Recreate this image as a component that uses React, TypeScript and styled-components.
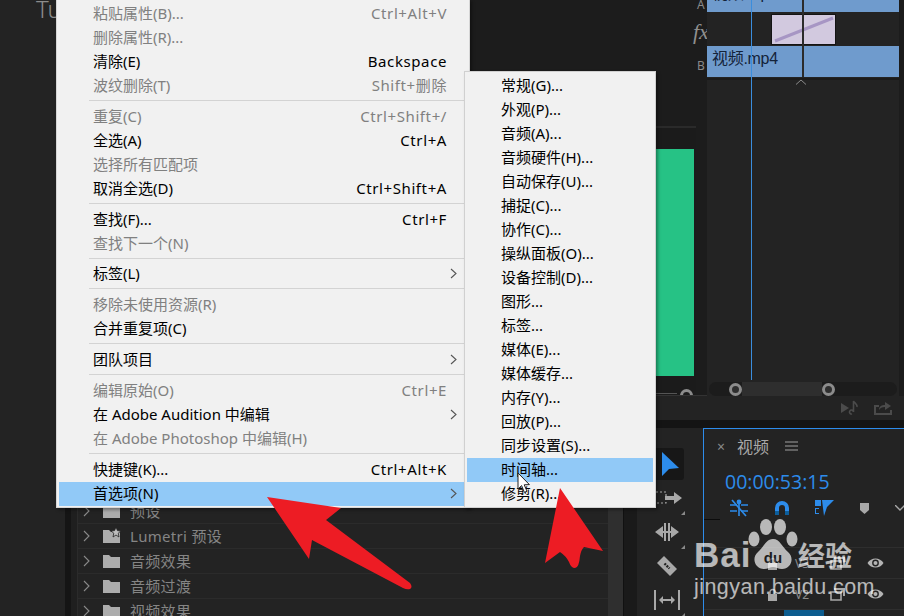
import styled, { createGlobalStyle } from "styled-components";

const UI_FONT = `"Noto Sans", "Noto Sans CJK SC", sans-serif`;

const GlobalStyle = createGlobalStyle`
  html, body {
    margin: 0;
    padding: 0;
    background: #232323;
  }
  * {
    box-sizing: border-box;
  }
`;

type MenuEntry = { label: string; shortcut?: string; off?: boolean; sub?: boolean; active?: boolean };

const MENU: MenuEntry[][] = [
  [
    { label: "粘贴属性(B)...", shortcut: "Ctrl+Alt+V", off: true },
    { label: "删除属性(R)...", off: true },
    { label: "清除(E)", shortcut: "Backspace" },
    { label: "波纹删除(T)", shortcut: "Shift+删除", off: true },
  ],
  [
    { label: "重复(C)", shortcut: "Ctrl+Shift+/", off: true },
    { label: "全选(A)", shortcut: "Ctrl+A" },
    { label: "选择所有匹配项", off: true },
    { label: "取消全选(D)", shortcut: "Ctrl+Shift+A" },
  ],
  [
    { label: "查找(F)...", shortcut: "Ctrl+F" },
    { label: "查找下一个(N)", off: true },
  ],
  [{ label: "标签(L)", sub: true }],
  [
    { label: "移除未使用资源(R)", off: true },
    { label: "合并重复项(C)" },
  ],
  [{ label: "团队项目", sub: true }],
  [
    { label: "编辑原始(O)", shortcut: "Ctrl+E", off: true },
    { label: "在 Adobe Audition 中编辑", sub: true },
    { label: "在 Adobe Photoshop 中编辑(H)", off: true },
  ],
  [
    { label: "快捷键(K)...", shortcut: "Ctrl+Alt+K" },
    { label: "首选项(N)", sub: true, active: true },
  ],
];

const PREFS = [
  "常规(G)...",
  "外观(P)...",
  "音频(A)...",
  "音频硬件(H)...",
  "自动保存(U)...",
  "捕捉(C)...",
  "协作(C)...",
  "操纵面板(O)...",
  "设备控制(D)...",
  "图形...",
  "标签...",
  "媒体(E)...",
  "媒体缓存...",
  "内存(Y)...",
  "回放(P)...",
  "同步设置(S)...",
  "时间轴...",
  "修剪(R)...",
];

const EFFECTS = ["预设", "Lumetri 预设", "音频效果", "音频过渡", "视频效果"];

function App() {
  return (
    <>
      <GlobalStyle />
      <Page>
        <TopZone>
          <UpperRow>
            <ProjectPane>
              <ProjectTitle>Tu</ProjectTitle>
            </ProjectPane>
            <MonitorPane>
              <MonitorHead />
              <MonitorBody>
                <GreenFrame />
                <ScrubLine />
                <ScrubRing />
              </MonitorBody>
            </MonitorPane>
            <TrackLabels>
              <TrackLetter $h={8}>A</TrackLetter>
              <FxLabel>fx</FxLabel>
              <TrackLetter $h={18}>B</TrackLetter>
            </TrackLabels>
            <SourceTimeline>
              <TrackArea>
                <ClipRow $h={12}>
                  <ClipTopName>视频.mp4</ClipTopName>
                </ClipRow>
                <EffectRow>
                  <EffectClip>
                    <svg width="63" height="29" viewBox="0 0 63 29">
                      <line x1="3" y1="26" x2="61" y2="3" stroke="#a796c4" strokeWidth="3" />
                    </svg>
                  </EffectClip>
                </EffectRow>
                <ClipRow $h={31}>
                  <ClipName>视频.mp4</ClipName>
                </ClipRow>
                <RowLine />
                <Caret>
                  <svg width="12" height="6" viewBox="0 0 12 6">
                    <path d="M1 5.5 L6 1 L11 5.5" fill="none" stroke="#8a8a8a" strokeWidth="1" />
                  </svg>
                </Caret>
                <EditLine />
                <Playhead />
              </TrackArea>
              <ZoomBar>
                <ZoomHandle />
                <ZoomRange />
                <ZoomHandle />
              </ZoomBar>
            </SourceTimeline>
            <EdgeStrip />
          </UpperRow>
          <FooterBar>
            <svg width="20" height="16" viewBox="0 0 20 16">
              <path d="M1 3 L9 8 L1 13 Z" fill="#4b4b4b" />
              <path d="M12 14 a2 2 0 1 1 1.5 -2 V1 c1 2 4 3 3.5 6" fill="none" stroke="#4b4b4b" strokeWidth="1.6" />
            </svg>
            <svg width="20" height="16" viewBox="0 0 20 16">
              <path d="M1 5 H6 V7 H3 V13 H17 V10 H19 V15 H1 Z" fill="#4b4b4b" />
              <path d="M6 10 C6 6 9 5 12 5 V2 L18 6 L12 10 V7 C9 7 7 8 6 10 Z" fill="#4b4b4b" />
            </svg>
          </FooterBar>
          <PanelGap />
        </TopZone>

        <BottomZone>
          <LeftGutter />
          <EffectsEdge />
          <EffectsPane>
            {EFFECTS.map((name, i) => (
              <EffectListRow key={name}>
                <svg width="9" height="14" viewBox="0 0 9 14">
                  <path d="M2 2 L7 7 L2 12" fill="none" stroke="#8a8a8a" strokeWidth="1.1" />
                </svg>
                <svg width="20" height="16" viewBox="0 0 20 16">
                  <path d="M1 2 H7 L9 4 H18 V15 H1 Z" fill="#acacac" />
                  {i === 1 && <path d="M14 -1 L15.4 2.6 L19 3 L16.2 5.2 L17 9 L14 7 L11 9 L11.8 5.2 L9 3 L12.6 2.6 Z" fill="#bdbdbd" stroke="#232323" strokeWidth="0.8" />}
                </svg>
                <EffectName>{name}</EffectName>
              </EffectListRow>
            ))}
          </EffectsPane>
          <PaneScroll />
          <PaneGutter />
          <ToolsPanel>
            <ToolSlot $selected>
              <svg width="20" height="26" viewBox="0 0 20 26">
                <path d="M2 1 L19 17 L9 18 L2 25 Z" fill="#2d8ceb" />
              </svg>
            </ToolSlot>
            <ToolSlot $corner>
              <svg width="32" height="16" viewBox="0 0 32 16">
                <rect x="1" y="2" width="14" height="11" fill="none" stroke="#a8a8a8" strokeWidth="1.2" strokeDasharray="2 2" />
                <path d="M14 6 H23 V2 L31 8 L23 14 V10 H14 Z" fill="#a8a8a8" />
              </svg>
            </ToolSlot>
            <ToolSlot $corner>
              <svg width="26" height="20" viewBox="0 0 26 20">
                <path d="M1 10 L9 4 V16 Z M25 10 L17 4 V16 Z" fill="#a8a8a8" />
                <rect x="10" y="1" width="2" height="18" fill="#a8a8a8" />
                <rect x="14" y="1" width="2" height="18" fill="#a8a8a8" />
                <rect x="9" y="9" width="8" height="2" fill="#a8a8a8" />
              </svg>
            </ToolSlot>
            <ToolSlot>
              <svg width="22" height="22" viewBox="0 0 22 22">
                <path d="M8 1 L21 14 L14 21 L1 8 Z" fill="#a8a8a8" />
                <path d="M8.5 8.5 L13.5 13.5" stroke="#232323" strokeWidth="2.4" strokeDasharray="2 1" />
              </svg>
            </ToolSlot>
            <ToolSlot $corner>
              <svg width="28" height="22" viewBox="0 0 28 22">
                <rect x="1" y="1" width="2" height="20" fill="#a8a8a8" />
                <rect x="25" y="1" width="2" height="20" fill="#a8a8a8" />
                <path d="M6 11 L10 7 V10 H18 V7 L22 11 L18 15 V12 H10 V15 Z" fill="#a8a8a8" />
              </svg>
            </ToolSlot>
          </ToolsPanel>
          <SequencePanel>
            <TabRow>
              <TabClose>×</TabClose>
              <TabName>视频</TabName>
              <TabMenu>
                <svg width="13" height="10" viewBox="0 0 13 10">
                  <path d="M0 1 H13 M0 5 H13 M0 9 H13" stroke="#a0a0a0" strokeWidth="1.2" />
                </svg>
              </TabMenu>
            </TabRow>
            <Timecode>00:00:53:15</Timecode>
            <SeqTools>
              <svg width="20" height="18" viewBox="0 0 20 18">
                <g stroke="#2d8ceb" strokeWidth="1.6" fill="#2d8ceb">
                  <path d="M10 1 V17 M1 6 H8 M12 6 H19 M1 12 H8 M12 12 H19" fill="none" />
                  <path d="M3 1 L17 17" fill="none" />
                  <circle cx="10" cy="3" r="1.6" />
                </g>
              </svg>
              <svg width="16" height="16" viewBox="0 0 16 16">
                <path d="M1 15 V8 a7 7 0 0 1 14 0 V15 H11 V8 a3 3 0 0 0 -6 0 V15 Z" fill="#2d8ceb" />
                <path d="M1 11 H5 V15 H1 Z M11 11 H15 V15 H11 Z" fill="#0d5e9c" />
              </svg>
              <svg width="19" height="18" viewBox="0 0 19 18">
                <path d="M0 1 H6 V7 H0 Z" fill="#2d8ceb" />
                <path d="M0 9 H4 V10 H1 V14 H4 V15 H0 Z" fill="#2d8ceb" />
                <path d="M7 1 H19 L12 8 L9 17 Z" fill="#2d8ceb" />
              </svg>
              <svg width="11" height="13" viewBox="0 0 11 13">
                <path d="M1 1 H10 V8 L5.5 12 L1 8 Z" fill="#a8a8a8" />
              </svg>
              <svg width="10" height="6" viewBox="0 0 10 6">
                <path d="M0 0 L5 5 L10 0" fill="none" stroke="#a8a8a8" strokeWidth="1.4" />
              </svg>
            </SeqTools>
            <RulerTick />
            <TrackHeader>
              <LockGlyph />
              <TrackName>V3</TrackName>
              <FilmGlyph />
              <EyeGlyph />
            </TrackHeader>
            <TrackHeader>
              <LockGlyph />
              <TrackName>V2</TrackName>
              <FilmGlyph />
              <EyeGlyph />
            </TrackHeader>
            <ClipLane>
              <SeqClip />
            </ClipLane>
          </SequencePanel>
        </BottomZone>

        <MainMenu>
          {MENU.map((section, i) => (
            <div key={i}>
              {i > 0 && <MenuDivider />}
              {section.map((item) => (
                <MenuRow key={item.label} $off={item.off} $active={item.active}>
                  <span>{item.label}</span>
                  {item.shortcut && <Shortcut>{item.shortcut}</Shortcut>}
                  {item.sub && (
                    <SubArrow>
                      <svg width="7" height="11" viewBox="0 0 7 11">
                        <path d="M1 1 L6 5.5 L1 10" fill="none" stroke="#555" strokeWidth="1.1" />
                      </svg>
                    </SubArrow>
                  )}
                </MenuRow>
              ))}
            </div>
          ))}
        </MainMenu>

        <SubMenu>
          {PREFS.map((label) => (
            <SubRow key={label} $active={label === "时间轴..."}>
              {label}
            </SubRow>
          ))}
        </SubMenu>

        <Pointer width="14" height="22" viewBox="0 0 14 22">
          <path d="M1 1 V17 L4.6 13.6 L7.4 20.4 L10 19.2 L7.2 12.8 L12.4 12.6 Z" fill="#fff" stroke="#222" strokeWidth="1" />
        </Pointer>

        <Watermark>
          <LogoLine>
            <LogoBai>Bai</LogoBai>
            <svg width="50" height="52" viewBox="0 0 50 52">
              <ellipse cx="6" cy="20" rx="5.5" ry="7.5" fill="#fff" />
              <ellipse cx="18" cy="8" rx="6" ry="8" fill="#fff" />
              <ellipse cx="32" cy="8" rx="6" ry="8" fill="#fff" />
              <ellipse cx="44" cy="20" rx="5.5" ry="7.5" fill="#fff" />
              <path d="M25 20 C32 20 34 28 40 33 C47 39 43 50 34 50 C30 50 28 48 25 48 C22 48 20 50 16 50 C7 50 3 39 10 33 C16 28 18 20 25 20 Z" fill="#fff" />
              <PawText x="25" y="44" textAnchor="middle">du</PawText>
            </svg>
            <LogoCn>经验</LogoCn>
          </LogoLine>
          <LogoUrl>jingyan.baidu.com</LogoUrl>
        </Watermark>

        <Annotation width="904" height="616" viewBox="0 0 904 616">
          <path d="M267 497 L341 508 L326 520 L410 583 Q413 587 410 589 Q407 590 403 588 L312 540 L309 559 Z" fill="#ed1c24" />
          <path d="M560 488 L603 551 L584 547 Q581 550 580 556 Q579 568 575 568 Q571 568 569 562 Q566 556 560 552 L545 563 Z" fill="#ed1c24" />
        </Annotation>
      </Page>
    </>
  );
}

function LockGlyph() {
  return (
    <svg width="11" height="13" viewBox="0 0 11 13">
      <path d="M1 6 H10 V13 H1 Z" fill="#a8a8a8" />
      <path d="M3 6 V4 a2.5 2.5 0 0 1 5 0 V6" fill="none" stroke="#a8a8a8" strokeWidth="1.4" />
    </svg>
  );
}

function FilmGlyph() {
  return (
    <svg width="16" height="14" viewBox="0 0 16 14">
      <path d="M4 1 H15 V9 H13 V3 H4 Z" fill="#a8a8a8" />
      <path d="M1 5 H11 V13 H1 Z" fill="none" stroke="#a8a8a8" strokeWidth="1.6" />
    </svg>
  );
}

function EyeGlyph() {
  return (
    <svg width="17" height="12" viewBox="0 0 17 12">
      <path d="M0.5 6 C4 0 13 0 16.5 6 C13 12 4 12 0.5 6 Z" fill="#b4b4b4" />
      <circle cx="8.5" cy="6" r="3.4" fill="#232323" />
      <circle cx="8.5" cy="6" r="2" fill="#b4b4b4" />
    </svg>
  );
}

//CSS
const Page = styled.div`
  position: relative;
  display: flex;
  flex-direction: column;
  width: 904px;
  height: 616px;
  overflow: hidden;
  background: #232323;
  font-family: ${UI_FONT};
`;

const TopZone = styled.div`
  display: flex;
  flex-direction: column;
  height: 428px;
  flex: none;
`;

const UpperRow = styled.div`
  display: flex;
  height: 396px;
`;

const ProjectPane = styled.div`
  width: 470px;
  background: #232323;
`;

const ProjectTitle = styled.div`
  padding-left: 36px;
  margin-top: -7px;
  font-size: 24px;
  font-weight: 300;
  line-height: 32px;
  color: #8c8c8c;
`;

const MonitorPane = styled.div`
  display: flex;
  flex-direction: column;
  width: 226px;
`;

const MonitorHead = styled.div`
  height: 128px;
  background: #1c1c1c;
  border-bottom: 2px solid #2a2a2a;
`;

const MonitorBody = styled.div`
  position: relative;
  flex: 1;
  padding: 21px 2px 0 0;
  overflow: hidden;
  background: #1b1b1b;
  border-bottom: 1px solid #333;
`;

const GreenFrame = styled.div`
  width: 224px;
  height: 227px;
  background: #26c285;
`;

const ScrubLine = styled.div`
  position: absolute;
  left: 0;
  bottom: 1px;
  width: 207px;
  height: 1px;
  background: #555;
`;

const ScrubRing = styled.div`
  position: absolute;
  left: 210px;
  bottom: -7px;
  width: 13px;
  height: 13px;
  border: 3px solid #8c8c8c;
  border-radius: 50%;
`;

const TrackLabels = styled.div`
  display: flex;
  flex-direction: column;
  width: 11px;
  background: #1c1c1c;
  color: #8a8a8a;
  border-bottom: 1px solid #333;
`;

const TrackLetter = styled.div<{ $h: number }>`
  display: flex;
  align-items: center;
  height: ${(p) => p.$h}px;
  padding-left: 1px;
  font-size: 12px;
`;

const FxLabel = styled.div`
  height: 48px;
  margin-left: -3px;
  font-family: "Liberation Serif", serif;
  font-style: italic;
  font-size: 22px;
  line-height: 48px;
  color: #8f8f8f;
`;

const SourceTimeline = styled.div`
  display: flex;
  flex-direction: column;
  flex: 1;
  background: #232323;
`;

const TrackArea = styled.div`
  position: relative;
  flex: 1;
  display: flex;
  flex-direction: column;
`;

const ClipRow = styled.div<{ $h: number }>`
  height: ${(p) => p.$h}px;
  overflow: hidden;
  background: #6f9bcd;
  color: #14233a;
`;

const ClipTopName = styled.div`
  margin-top: -16px;
  padding-left: 5px;
  font-family: "Liberation Sans", "Noto Sans CJK SC", sans-serif;
  font-size: 16px;
  letter-spacing: -0.3px;
  line-height: 20px;
`;

const ClipName = styled.div`
  padding-left: 5px;
  font-family: "Liberation Sans", "Noto Sans CJK SC", sans-serif;
  font-size: 16px;
  letter-spacing: -0.3px;
  line-height: 26px;
`;

const EffectRow = styled.div`
  height: 34px;
  padding: 3px 0 2px 65px;
`;

const EffectClip = styled.div`
  width: 63px;
  height: 29px;
  background: #d2c9df;
  outline: 1px solid #141414;
`;

const RowLine = styled.div`
  height: 2px;
  margin-top: 1px;
  background: #1b1b1b;
`;

const Caret = styled.div`
  display: flex;
  padding: 0 0 0 88px;
  margin-top: -1px;
`;

const EditLine = styled.div`
  position: absolute;
  top: 0;
  left: 95px;
  width: 2px;
  height: 77px;
  background: #2b2b2b;
`;

const Playhead = styled.div`
  position: absolute;
  top: 0;
  left: 44px;
  width: 1px;
  height: 380px;
  background: #3a8ddd;
`;

const ZoomBar = styled.div`
  display: flex;
  align-items: center;
  height: 14px;
  margin: 0 2px 0 2px;
  padding-left: 20px;
  border-radius: 7px;
  background: #1c1c1c;
`;

const ZoomHandle = styled.div`
  flex: none;
  width: 13px;
  height: 13px;
  border: 3px solid #8c8c8c;
  border-radius: 50%;
  background: #2e2e2e;
`;

const ZoomRange = styled.div`
  width: 80px;
  height: 14px;
  background: #2e2e2e;
`;

const EdgeStrip = styled.div`
  width: 5px;
  background: #1c1c1c;
`;

const FooterBar = styled.div`
  display: flex;
  align-items: center;
  justify-content: flex-end;
  gap: 13px;
  height: 24px;
  padding-right: 11px;
  background: #232323;
`;

const PanelGap = styled.div`
  flex: 1;
  margin-left: 470px;
  background: #141414;
`;

const BottomZone = styled.div`
  display: flex;
  flex: 1;
  min-height: 0;
`;

const LeftGutter = styled.div`
  flex: none;
  width: 71px;
  background: #232323;
  border-right: 6px solid #151515;
`;

const EffectsEdge = styled.div`
  flex: none;
  width: 7px;
  background: #1f1f1f;
  border-right: 1px solid #2b2b2b;
`;

const EffectsPane = styled.div`
  flex: none;
  width: 530px;
  padding-top: 71px;
  background: #232323;
`;

const EffectListRow = styled.div`
  display: flex;
  align-items: center;
  height: 25px;
  padding-left: 4px;
  border-bottom: 1px solid #2b2b2b;
  svg:nth-child(2) {
    margin-left: 11px;
  }
`;

const EffectName = styled.span`
  margin: -2px 0 0 8px;
  font-size: 15px;
  color: #858585;
  letter-spacing: 0.3px;
`;

const PaneScroll = styled.div`
  flex: none;
  width: 15px;
  background: #2f2f2f;
`;

const PaneGutter = styled.div`
  flex: none;
  width: 14px;
  background: #1a1a1a;
  border-left: 1px solid #111;
`;

const ToolsPanel = styled.div`
  display: flex;
  flex: none;
  flex-direction: column;
  gap: 2px;
  width: 66px;
  padding: 20px 19px 0 10px;
  background: #232323;
`;

const ToolSlot = styled.div<{ $selected?: boolean; $corner?: boolean }>`
  position: relative;
  display: flex;
  flex: none;
  align-items: center;
  justify-content: center;
  height: 32px;
  padding-left: ${(p) => (p.$selected ? "8px" : "3px")};
  border-radius: 3px;
  background: ${(p) => (p.$selected ? "#171717" : "transparent")};
  &::after {
    content: "";
    display: ${(p) => (p.$corner ? "block" : "none")};
    position: absolute;
    right: -1px;
    bottom: -1px;
    border-left: 4px solid transparent;
    border-bottom: 4px solid #8a8a8a;
  }
`;

const SequencePanel = styled.div`
  flex: none;
  width: 201px;
  overflow: hidden;
  background: #232323;
  border-top: 1px solid #2d8ceb;
  border-left: 1px solid #2d8ceb;
`;

const TabRow = styled.div`
  display: flex;
  align-items: center;
  height: 34px;
  padding-left: 13px;
`;

const TabClose = styled.span`
  width: 20px;
  font-size: 14px;
  color: #8a8a8a;
`;

const TabName = styled.span`
  font-size: 16px;
  color: #a8a8a8;
`;

const TabMenu = styled.span`
  display: flex;
  margin-left: 16px;
`;

const Timecode = styled.div`
  margin-top: 6px;
  padding-left: 21px;
  font-family: "Open Sans", sans-serif;
  font-size: 19.5px;
  line-height: 26px;
  color: #2d8ceb;
`;

const SeqTools = styled.div`
  display: flex;
  align-items: center;
  gap: 25px;
  height: 20px;
  margin-top: 3px;
  padding-left: 25px;
  width: 230px;
  svg {
    flex: none;
  }
`;

const RulerTick = styled.div`
  width: 16px;
  height: 1px;
  margin-top: 1px;
  margin-bottom: 27px;
  background: #0c0c0c;
`;

const TrackHeader = styled.div`
  display: grid;
  grid-template-columns: 24px 22px 33px auto;
  align-items: center;
  height: 31px;
  padding-left: 63px;
  border-top: 1px solid #2e2e2e;
  svg:nth-child(3) {
    justify-self: end;
  }
  svg:nth-child(4) {
    margin-left: 21px;
  }
`;

const TrackName = styled.span`
  font-size: 12px;
  color: #8a8a8a;
  text-align: center;
`;

const ClipLane = styled.div`
  border-top: 1px solid #2e2e2e;
`;

const SeqClip = styled.div`
  width: 40px;
  height: 8px;
  margin-left: 80px;
  background: #0c5c8e;
`;

const MainMenu = styled.div`
  position: absolute;
  top: -1px;
  left: 56px;
  width: 414px;
  height: 509px;
  padding: 2px 2px 0;
  background: #f1f1f1;
  border: 1px solid #d6d6d6;
  box-shadow: 2px 2px 3px rgba(0, 0, 0, 0.35);
`;

const MenuDivider = styled.div`
  height: 6.8px;
  margin-left: 30px;
  padding-top: 2px;
  &::before {
    content: "";
    display: block;
    height: 1px;
    background: #d3d3d3;
  }
`;

const MenuRow = styled.div<{ $off?: boolean; $active?: boolean }>`
  position: relative;
  display: flex;
  align-items: center;
  justify-content: space-between;
  height: 24px;
  padding: 0 20px 2px 34px;
  font-size: 15px;
  line-height: 22px;
  white-space: nowrap;
  color: ${(p) => (p.$off ? "#808080" : "#000")};
  background: ${(p) => (p.$active ? "#91c9f7" : "transparent")};
`;

const Shortcut = styled.span`
  letter-spacing: 0.6px;
`;

const SubArrow = styled.span`
  position: absolute;
  top: 6px;
  right: 10px;
  display: flex;
`;

const SubMenu = styled.div`
  position: absolute;
  top: 71px;
  left: 464px;
  width: 192px;
  height: 437px;
  padding: 2px 2px 0;
  background: #f1f1f1;
  border: 1px solid #d0d0d0;
  box-shadow: 2px 2px 3px rgba(0, 0, 0, 0.35);
`;

const SubRow = styled.div<{ $active?: boolean }>`
  height: 24px;
  padding-left: 34px;
  font-size: 15px;
  line-height: 22px;
  color: #000;
  background: ${(p) => (p.$active ? "#91c9f7" : "transparent")};
`;

const Pointer = styled.svg`
  position: absolute;
  top: 472px;
  left: 517px;
`;

const Watermark = styled.div`
  position: absolute;
  top: 519px;
  left: 694px;
  display: flex;
  flex-direction: column;
  width: 164px;
  color: #fff;
  opacity: 0.68;
  pointer-events: none;
`;

const LogoLine = styled.div`
  display: flex;
  align-items: flex-end;
  height: 52px;
`;

const LogoBai = styled.span`
  width: 54px;
  font-family: "Liberation Sans", sans-serif;
  font-size: 35px;
  font-weight: 700;
  line-height: 32px;
  letter-spacing: 1px;
`;

const LogoCn = styled.span`
  font-family: "Noto Sans CJK SC", sans-serif;
  font-size: 27px;
  font-weight: 700;
  line-height: 32px;
`;

const PawText = styled.text`
  font-family: "Liberation Sans", sans-serif;
  font-size: 15px;
  font-weight: 700;
  fill: #1a1a1a;
`;

const LogoUrl = styled.div`
  margin-top: 4px;
  font-family: "Liberation Sans", sans-serif;
  font-size: 21.5px;
  line-height: 24px;
  letter-spacing: 0.45px;
  white-space: nowrap;
`;

const Annotation = styled.svg`
  position: absolute;
  top: 0;
  left: 0;
  pointer-events: none;
`;

export default App;
